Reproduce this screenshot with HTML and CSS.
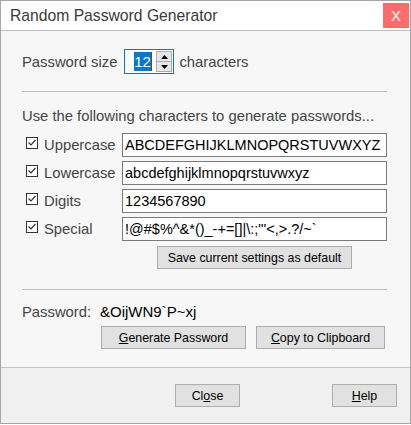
FILE: index.html
```html
<!DOCTYPE html>
<html>
<head>
<meta charset="utf-8">
<title>Random Password Generator</title>
<link rel="stylesheet" href="styles.css">
</head>
<body>
<div class="window">
  <div class="titlebar">
    <span class="title">Random Password Generator</span>
    <span class="close-x">X</span>
  </div>
  <div class="content">
    <div class="size-row">
      <span class="label">Password size</span>
      <div class="spin">
        <div class="spin-value"><span class="sel">12</span><span class="caret"></span></div>
        <div class="spin-btns">
          <div class="spin-btn"><svg width="7" height="4" viewBox="0 0 7 4"><polygon points="3.5,0 7,4 0,4" fill="#000"/></svg></div>
          <div class="spin-btn"><svg width="7" height="4" viewBox="0 0 7 4"><polygon points="0,0 7,0 3.5,4" fill="#000"/></svg></div>
        </div>
      </div>
      <span class="label">characters</span>
    </div>
    <div class="sep"></div>
    <div class="intro label">Use the following characters to generate passwords...</div>
    <div class="charsets">
      <div class="cs-row">
        <svg class="cb" width="12" height="12" viewBox="0 0 12 12"><rect x="0.5" y="0.5" width="11" height="11" fill="#fff" stroke="#333"/><polyline points="2.5,5.5 5,8 9.5,3" fill="none" stroke="#333" stroke-width="1.2"/></svg>
        <span class="label cs-label">Uppercase</span>
        <div class="field">ABCDEFGHIJKLMNOPQRSTUVWXYZ</div>
      </div>
      <div class="cs-row">
        <svg class="cb" width="12" height="12" viewBox="0 0 12 12"><rect x="0.5" y="0.5" width="11" height="11" fill="#fff" stroke="#333"/><polyline points="2.5,5.5 5,8 9.5,3" fill="none" stroke="#333" stroke-width="1.2"/></svg>
        <span class="label cs-label">Lowercase</span>
        <div class="field">abcdefghijklmnopqrstuvwxyz</div>
      </div>
      <div class="cs-row">
        <svg class="cb" width="12" height="12" viewBox="0 0 12 12"><rect x="0.5" y="0.5" width="11" height="11" fill="#fff" stroke="#333"/><polyline points="2.5,5.5 5,8 9.5,3" fill="none" stroke="#333" stroke-width="1.2"/></svg>
        <span class="label cs-label">Digits</span>
        <div class="field">1234567890</div>
      </div>
      <div class="cs-row">
        <svg class="cb" width="12" height="12" viewBox="0 0 12 12"><rect x="0.5" y="0.5" width="11" height="11" fill="#fff" stroke="#333"/><polyline points="2.5,5.5 5,8 9.5,3" fill="none" stroke="#333" stroke-width="1.2"/></svg>
        <span class="label cs-label">Special</span>
        <div class="field">!@#$%^&amp;*()_-+=[]|\:;"'&lt;,&gt;.?/~`</div>
      </div>
    </div>
    <div class="save-wrap"><button class="btn save">Save current settings as default</button></div>
    <div class="sep sep2"></div>
    <div class="pw-row"><span class="label pw-label">Password:</span><span class="pw-value">&amp;OijWN9`P~xj</span></div>
    <div class="pw-btns">
      <button class="btn gen"><u>G</u>enerate Password</button>
      <button class="btn copy"><u>C</u>opy to Clipboard</button>
    </div>
  </div>
  <div class="footer">
    <button class="btn close">Cl<u>o</u>se</button>
    <button class="btn help"><u>H</u>elp</button>
  </div>
</div>
</body>
</html>
```
FILE: styles.css
```css
html, body {
  margin: 0;
  padding: 0;
  background: #ffffff;
}
body {
  font-family: "Liberation Sans", Arial, sans-serif;
}
.window {
  width: 411px;
  height: 424px;
  box-sizing: border-box;
  border: 1px solid #a6a6a6;
  display: flex;
  flex-direction: column;
}
.titlebar {
  height: 30px;
  box-sizing: border-box;
  border-bottom: 1px solid #bcbcbc;
  background: #ffffff;
  display: flex;
  align-items: flex-start;
}
.title {
  padding-left: 9px;
  line-height: 29px;
  font-size: 15.7px;
  color: #3a3a3a;
  flex: 1;
}
.close-x {
  width: 26px;
  height: 25px;
  margin-top: 2px;
  margin-right: 1px;
  background: #ff6b6b;
  color: #ffffff;
  font-size: 15px;
  line-height: 25px;
  text-align: center;
}
.content {
  height: 336px;
  box-sizing: border-box;
  background: #f7f7f7;
  padding: 18px 23px 0 21px;
  overflow: hidden;
}
.label {
  font-size: 14.8px;
  color: #444444;
}
.size-row {
  display: flex;
  align-items: center;
  height: 25px;
}
.spin {
  width: 50px;
  height: 25px;
  box-sizing: border-box;
  border: 1px solid #0078d7;
  background: #ffffff;
  margin: 0 5px 0 7px;
  display: flex;
}
.spin-value {
  flex: 1;
  display: flex;
  align-items: center;
  justify-content: flex-end;
  padding-right: 4px;
}
.sel {
  background: #0078d7;
  color: #ffffff;
  font-size: 15px;
  line-height: 19px;
  padding: 0 0.5px;
}
.caret {
  width: 1px;
  height: 19px;
  background: #5a4a3a;
}
.spin-btns {
  width: 16px;
  display: flex;
  flex-direction: column;
  padding: 1px 1px 1px 0;
}
.spin-btn {
  flex: 1;
  box-sizing: border-box;
  border: 1px solid #adadad;
  background: #e6e6e6;
  display: flex;
  align-items: center;
  justify-content: center;
}
.spin-btn + .spin-btn {
  border-top: none;
}
.spin-btn svg {
  display: block;
}
.sep {
  height: 1px;
  background: #bcbcbc;
  margin-top: 17px;
}
.intro {
  margin-top: 14px;
  line-height: 20px;
}
.charsets {
  margin-top: 7px;
  display: flex;
  flex-direction: column;
  gap: 4px;
}
.cs-row {
  display: flex;
  align-items: center;
  height: 24px;
  padding-left: 4px;
}
.cb {
  flex: none;
  align-self: flex-start;
  margin-top: 4px;
  display: block;
}
.cs-label {
  margin-left: 6px;
  width: 78px;
  flex: none;
}
.field {
  flex: 1;
  height: 24px;
  box-sizing: border-box;
  border: 1px solid #7a7a7a;
  background: #ffffff;
  font-size: 14.5px;
  line-height: 22px;
  padding-left: 2px;
  color: #000000;
  white-space: nowrap;
  overflow: hidden;
}
.save-wrap {
  margin-top: 5px;
  padding-left: 100px;
  display: flex;
  justify-content: center;
}
.btn {
  height: 23px;
  box-sizing: border-box;
  border: 1px solid #adadad;
  background: #e1e1e1;
  color: #000000;
  font-family: "Liberation Sans", Arial, sans-serif;
  font-size: 12.4px;
  padding: 0;
  margin: 0;
  border-radius: 0;
}
.save {
  width: 195px;
}
.sep2 {
  margin-top: 20px;
}
.pw-row {
  margin-top: 12px;
  line-height: 20px;
  display: flex;
}
.pw-label {
  width: 78px;
  flex: none;
}
.pw-value {
  font-size: 15px;
  color: #000000;
}
.pw-btns {
  margin-top: 4px;
  padding-left: 79px;
  display: flex;
  gap: 10px;
}
.gen {
  width: 145px;
}
.copy {
  width: 129px;
}
.footer {
  flex: 1;
  border-top: 1px solid #c4c4c4;
  background: #f0f0f0;
  padding: 16px 0 0 174px;
  display: flex;
  align-items: flex-start;
  gap: 92px;
}
.close, .help {
  width: 65px;
}
```
